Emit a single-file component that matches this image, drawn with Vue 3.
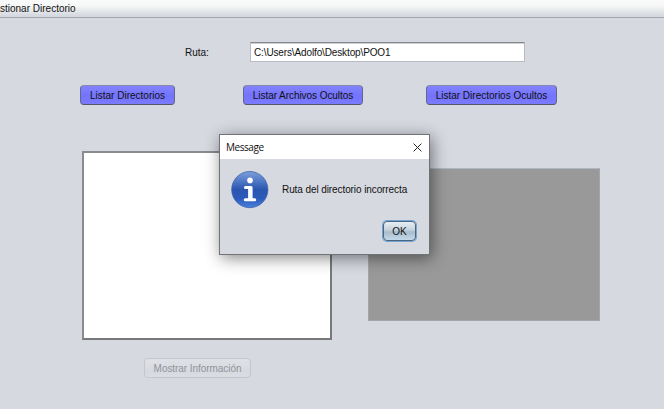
<script setup>
import { ref } from 'vue'

const route = ref('C:\\Users\\Adolfo\\Desktop\\POO1')
const open = ref(true)
</script>

<template>
  <div class="window">
    <header class="menubar"><span class="menu">stionar Directorio</span></header>
    <main class="content">
      <div class="route">
        <label class="route-label" for="route">Ruta:</label>
        <input id="route" v-model="route" class="route-field" type="text" spellcheck="false" />
      </div>
      <div class="actions">
        <button class="btn dirs">Listar Directorios</button>
        <button class="btn hidden-files">Listar Archivos Ocultos</button>
        <button class="btn hidden-dirs">Listar Directorios Ocultos</button>
      </div>
      <div class="panels">
        <div class="list"></div>
        <div class="table"></div>
      </div>
      <button class="info-btn" disabled>Mostrar Información</button>
    </main>

    <section v-if="open" class="dialog" role="dialog">
      <header class="titlebar">
        <span class="title">Message</span>
        <svg class="close" width="9" height="9" viewBox="0 0 9 9" @click="open = false">
          <path d="M.6 .6L8.4 8.4M8.4 .6L.6 8.4" fill="none" stroke="#222" stroke-width="1" />
        </svg>
      </header>
      <div class="message">
        <svg width="38" height="38" viewBox="0 0 38 38">
          <defs>
            <linearGradient id="ball" x1="0" y1="0" x2="0" y2="1">
              <stop offset="0" stop-color="#7d9fda" />
              <stop offset=".3" stop-color="#4a73c2" />
              <stop offset=".5" stop-color="#2a56b0" />
              <stop offset=".75" stop-color="#2c5bbb" />
              <stop offset="1" stop-color="#4a80dc" />
            </linearGradient>
          </defs>
          <circle cx="18.8" cy="18.6" r="18.1" fill="url(#ball)" stroke="#3a62ae" stroke-width=".8" />
          <circle cx="19" cy="9.4" r="2.8" fill="#fff" />
          <path d="M14.4 14.9H20Q21.6 14.9 21.6 16.4V27.2H23.8Q25.2 27.2 25.2 28.7Q25.2 30.2 23.8 30.2H14.2Q12.8 30.2 12.8 28.7Q12.8 27.2 14.2 27.2H17.1V18H14.4Q13 18 13 16.4Q13 14.9 14.4 14.9Z" fill="#fff" />
        </svg>
        <span class="message-text">Ruta del directorio incorrecta</span>
      </div>
      <footer class="dialog-footer">
        <button class="ok" @click="open = false">OK</button>
      </footer>
    </section>
  </div>
</template>

<style>
body {
  margin: 0;
  overflow: hidden;
}
</style>

<style scoped>
* {
  box-sizing: border-box;
}
.window {
  position: relative;
  width: 664px;
  height: 409px;
  overflow: hidden;
  background: #d6d9e0;
  color: #111;
  font: 10px/12px "Liberation Sans", Arial, sans-serif;
}
button,
input {
  margin: 0;
  padding: 0;
  font: inherit;
  color: inherit;
  white-space: nowrap;
}
.menubar {
  height: 18px;
  padding-top: 3px;
  border-bottom: 1px solid #9fa4b0;
  background: linear-gradient(#fafafa 0, #f5f6f6 35%, #e4e7e9 65%, #d6d9e0 90%);
}
.menu {
  display: block;
}
.content {
  display: flex;
  flex-direction: column;
}
.route {
  display: flex;
  align-items: center;
  margin: 24px 0 0 185px;
}
.route-label {
  width: 65px;
  padding-top: 2px;
}
.route-field {
  width: 275px;
  height: 20px;
  padding: 0 3px;
  border: 1px solid #b9bbc0;
  border-top: 1px solid #85878b;
  border-radius: 0;
  outline: 0;
  background: #fff;
  box-shadow: inset 0 1px #d0d0d2;
  letter-spacing: -0.13px;
}
.actions {
  display: flex;
  margin: 23px 0 0 80px;
}
.btn {
  height: 20px;
  padding-top: 2px;
  border: 1px solid #63678c;
  border-top-color: #8788ac;
  border-bottom-color: #54566b;
  border-radius: 4px;
  background: linear-gradient(#8383ff, #7373fc 55%, #7b7bff);
}
.dirs {
  width: 95px;
}
.hidden-files {
  width: 120px;
  margin-left: 68px;
  letter-spacing: -0.06px;
}
.hidden-dirs {
  width: 131px;
  margin-left: 63px;
}
.panels {
  display: flex;
  align-items: flex-start;
  margin: 46px 0 0 82px;
}
.list {
  width: 250px;
  height: 189px;
  border: 2px solid #898b8f;
  border-right-color: #77787b;
  border-bottom-color: #77787b;
  background: #fff;
}
.table {
  width: 232px;
  height: 153px;
  margin: 17px 0 0 36px;
  border: 1px solid #a1a5ae;
  border-top-color: #afb6c2;
  background: #999;
}
.info-btn {
  width: 107px;
  height: 20px;
  padding-top: 1px;
  margin: 18px 0 0 144px;
  border: 1px solid #c3c6cc;
  border-radius: 4px;
  background: linear-gradient(#dfe1e5, #d6d9df 70%, #dadde3);
  color: #92949a;
  letter-spacing: -0.06px;
}
.dialog {
  position: absolute;
  left: 219px;
  top: 134px;
  display: flex;
  flex-direction: column;
  width: 211px;
  height: 121px;
  border: 1px solid #707277;
  background: #d6d9e0;
  box-shadow: 2px 3px 15px rgba(0, 0, 0, 0.48);
}
.titlebar {
  display: flex;
  align-items: center;
  justify-content: space-between;
  height: 24px;
  padding: 0 7px 0 6px;
  background: #fff;
}
.title {
  font: 10px/14px "Open Sans", "Noto Sans", sans-serif;
  letter-spacing: -0.45px;
}
.close {
  display: block;
}
.message {
  display: flex;
  align-items: center;
  height: 38px;
  margin: 12px 0 0 11px;
  gap: 13px;
}
.message-text {
  letter-spacing: -0.09px;
  white-space: nowrap;
}
.dialog-footer {
  display: flex;
  justify-content: flex-end;
  margin: 12px 13px 0 0;
}
.ok {
  width: 33px;
  height: 20px;
  padding-top: 1px;
  border: 1px solid #4a6580;
  border-radius: 4px;
  background: linear-gradient(#e8eff4, #c3d1dc 45%, #a8bccb 55%, #c3d9e9);
  box-shadow: 0 0 0 1px #73a4d1;
}
</style>
